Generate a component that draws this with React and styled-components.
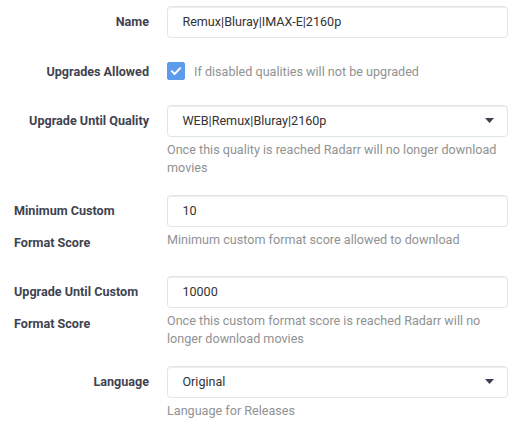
import React from "react";
import styled, { createGlobalStyle } from "styled-components";

const Global = createGlobalStyle`
  html, body { margin: 0; padding: 0; background: #fff; }
  body { font-family: Roboto, "Open Sans", "Liberation Sans", sans-serif; }
  * { box-sizing: border-box; }
`;

const Form = styled.div`
  padding: 6px 16px 0 14px;
  width: 524px;
`;

const Group = styled.div`
  display: flex;
  align-items: flex-start;
  margin-bottom: 18px;
`;

const Label = styled.label`
  display: flex;
  justify-content: flex-end;
  flex: 0 0 153px;
  padding-right: 18px;
  font-size: 12.6px;
  font-weight: 700;
  line-height: 31.5px;
  color: #3f4350;
`;

const Field = styled.div`
  flex: 1 1 auto;
  min-width: 0;
  display: flex;
  flex-direction: column;
`;

const TextInput = styled.div`
  height: 31.5px;
  padding: 0 14.4px;
  display: flex;
  align-items: center;
  border: 1px solid #dde6e9;
  border-radius: 3.6px;
  box-shadow: inset 0 1px 1px rgba(0, 0, 0, 0.075);
  font-size: 12.6px;
  color: #333;
  background: #fff;
`;

const SelectBox = styled(TextInput)`
  justify-content: space-between;
  padding-right: 13px;
`;

const Help = styled.div`
  margin-top: 4.5px;
  font-size: 12.6px;
  line-height: 18px;
  color: #909293;
`;

const CheckRow = styled.div`
  height: 31.5px;
  display: flex;
  align-items: center;
  gap: 9px;
`;

const CheckBox = styled.span`
  width: 18px;
  height: 18px;
  border-radius: 2px;
  background: #5d9cec;
  border: 1px solid #5d9cec;
  display: flex;
  align-items: center;
  justify-content: center;
`;

const CheckText = styled.span`
  font-size: 12.6px;
  color: #909293;
`;

const Caret = () => (
  <svg width="9" height="5" viewBox="0 0 9 5">
    <path d="M0 0 L9 0 L4.5 5 Z" fill="#3a3f51" />
  </svg>
);

const Check = () => (
  <svg width="14" height="14" viewBox="0 0 14 14">
    <path d="M2.8 7.2 L5.6 10 L11.2 4.2" fill="none" stroke="#fff" strokeWidth="1.9" strokeLinecap="round" strokeLinejoin="round" />
  </svg>
);

export default function App() {
  return (
    <>
      <Global />
      <Form>
        <Group>
          <Label>Name</Label>
          <Field>
            <TextInput>Remux|Bluray|IMAX-E|2160p</TextInput>
          </Field>
        </Group>
        <Group>
          <Label>Upgrades Allowed</Label>
          <Field>
            <CheckRow>
              <CheckBox><Check /></CheckBox>
              <CheckText>If disabled qualities will not be upgraded</CheckText>
            </CheckRow>
          </Field>
        </Group>
        <Group>
          <Label>Upgrade Until Quality</Label>
          <Field>
            <SelectBox>
              <span>WEB|Remux|Bluray|2160p</span>
              <Caret />
            </SelectBox>
            <Help>Once this quality is reached Radarr will no longer download movies</Help>
          </Field>
        </Group>
        <Group>
          <Label>Minimum Custom Format Score</Label>
          <Field>
            <TextInput>10</TextInput>
            <Help>Minimum custom format score allowed to download</Help>
          </Field>
        </Group>
        <Group>
          <Label>Upgrade Until Custom Format Score</Label>
          <Field>
            <TextInput>10000</TextInput>
            <Help>Once this custom format score is reached Radarr will no longer download movies</Help>
          </Field>
        </Group>
        <Group>
          <Label>Language</Label>
          <Field>
            <SelectBox>
              <span>Original</span>
              <Caret />
            </SelectBox>
            <Help>Language for Releases</Help>
          </Field>
        </Group>
      </Form>
    </>
  );
}
